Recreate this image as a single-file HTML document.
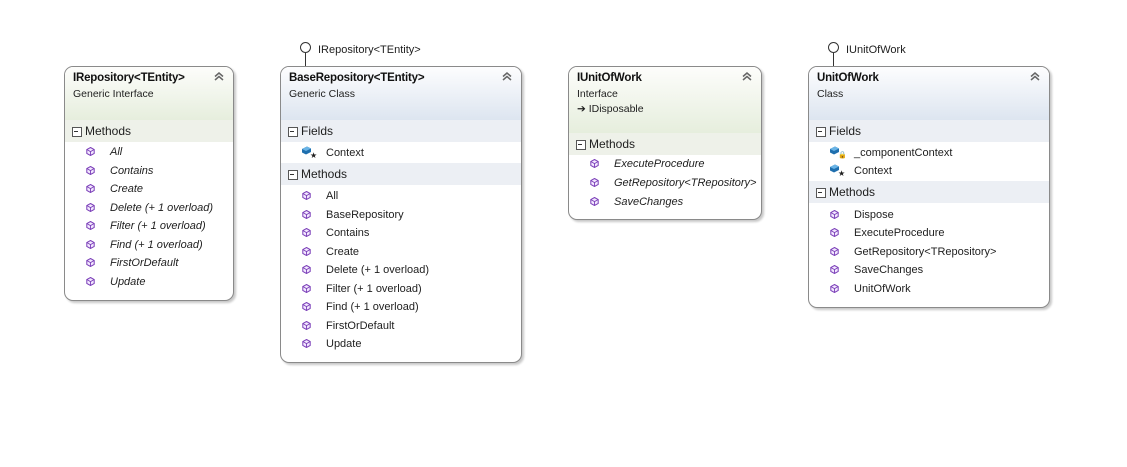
<!DOCTYPE html>
<html><head><meta charset="utf-8"><style>
*{margin:0;padding:0;box-sizing:border-box}
body{width:1127px;height:467px;background:#fff;position:relative;overflow:hidden;font-family:"Liberation Sans",sans-serif;font-size:11px;color:#1e1e1e}
.box{position:absolute;border:1px solid #8a8a8a;border-radius:9px;background:#fff;box-shadow:2px 2px 2px #c8c8c8;overflow:hidden}
.hd{position:absolute;left:0;right:0;top:0}
.hd.i{background:linear-gradient(#fdfdfb,#e6eedd)}
.hd.c{background:linear-gradient(#fdfdfe,#dde5f0)}
.t{position:absolute;left:8px;top:5px;font-weight:bold;font-size:11.5px;color:#111;letter-spacing:-0.2px}
.st{position:absolute;left:8px;top:21px;font-size:10.5px}
.st2{position:absolute;left:8px;top:36px;font-size:10.5px}
.chev{position:absolute;right:9px;top:5px;width:10px;height:9px}
.sec{position:absolute;left:0;right:0;height:22px;background:#f1f1f1;font-size:12px;padding-left:20px;line-height:22px}
.sec.i{background:#eef1e9}
.sec.c{background:#eceff4}
.sec:before{content:"";position:absolute;left:7px;top:7px;width:8px;height:8px;border:1px solid #555;background:#fff}
.sec:after{content:"";position:absolute;left:9px;top:11px;width:4px;height:1px;background:#333}
.it{position:absolute;font-size:11px;white-space:nowrap}
.it.em{font-style:italic}
.m{position:absolute;width:9px;height:9px}
.f{position:absolute;width:12px;height:12px}
.lol{position:absolute;width:11px;height:11px;border:1px solid #333;border-radius:50%;background:#fff}
.ln{position:absolute;width:1px;background:#333}
.lt{position:absolute;font-size:11px}
</style></head><body>
<svg width="0" height="0" style="position:absolute"><defs>
<symbol id="mi" viewBox="0 0 9 9"><path d="M4.5 0.5 L8.2 2.5 L8.2 6.5 L4.5 8.5 L0.8 6.5 L0.8 2.5 Z" fill="#f3e8ff" stroke="#7b3fb8" stroke-width="1"/><path d="M0.8 2.5 L4.5 4.6 L8.2 2.5 M4.5 4.6 L4.5 8.5" fill="none" stroke="#7b3fb8" stroke-width="0.9"/></symbol>
<symbol id="fi" viewBox="0 0 12 12"><path d="M1 4 L6 1.5 L10 3.5 L10 7 L5 9.5 L1 7.5 Z" fill="#1f6fae"/><path d="M1 4 L6 1.5 L10 3.5 L5 6 Z" fill="#6ab4e6"/></symbol>
<symbol id="ch" viewBox="0 0 10 9"><path d="M1 4.5 L5 1 L9 4.5 M1 8 L5 4.5 L9 8" fill="none" stroke="#666" stroke-width="1.5"/></symbol>
</defs></svg>

<!-- Box 1 -->
<div class="box" style="left:64px;top:66px;width:170px;height:235px">
<div class="hd i" style="height:53px"><div class="t">IRepository&lt;TEntity&gt;</div><div class="st">Generic Interface</div><svg class="chev"><use href="#ch"/></svg></div>
<div class="sec i" style="top:53px">Methods</div>
</div>

<!-- Box 2 -->
<div class="lol" style="left:300px;top:42px"></div><div class="ln" style="left:305px;top:53px;height:13px"></div><div class="lt" style="left:318px;top:44px">IRepository&lt;TEntity&gt;</div>
<div class="box" style="left:280px;top:66px;width:242px;height:297px">
<div class="hd c" style="height:53px"><div class="t">BaseRepository&lt;TEntity&gt;</div><div class="st">Generic Class</div><svg class="chev"><use href="#ch"/></svg></div>
<div class="sec c" style="top:53px">Fields</div>
<div class="sec c" style="top:96px">Methods</div>
</div>

<!-- Box 3 -->
<div class="box" style="left:568px;top:66px;width:194px;height:154px">
<div class="hd i" style="height:66px"><div class="t">IUnitOfWork</div><div class="st">Interface</div><div class="st2">➔ IDisposable</div><svg class="chev"><use href="#ch"/></svg></div>
<div class="sec i" style="top:66px">Methods</div>
</div>

<!-- Box 4 -->
<div class="lol" style="left:828px;top:42px"></div><div class="ln" style="left:833px;top:53px;height:13px"></div><div class="lt" style="left:846px;top:44px">IUnitOfWork</div>
<div class="box" style="left:808px;top:66px;width:242px;height:242px">
<div class="hd c" style="height:53px"><div class="t">UnitOfWork</div><div class="st">Class</div><svg class="chev"><use href="#ch"/></svg></div>
<div class="sec c" style="top:53px">Fields</div>
<div class="sec c" style="top:114px">Methods</div>
</div>

<!-- Items box1 -->
<svg class="m" style="left:86px;top:147px"><use href="#mi"/></svg><div class="it em" style="left:110px;top:146px">All</div>
<svg class="m" style="left:86px;top:166px"><use href="#mi"/></svg><div class="it em" style="left:110px;top:165px">Contains</div>
<svg class="m" style="left:86px;top:184px"><use href="#mi"/></svg><div class="it em" style="left:110px;top:183px">Create</div>
<svg class="m" style="left:86px;top:203px"><use href="#mi"/></svg><div class="it em" style="left:110px;top:202px">Delete (+ 1 overload)</div>
<svg class="m" style="left:86px;top:221px"><use href="#mi"/></svg><div class="it em" style="left:110px;top:220px">Filter (+ 1 overload)</div>
<svg class="m" style="left:86px;top:240px"><use href="#mi"/></svg><div class="it em" style="left:110px;top:239px">Find (+ 1 overload)</div>
<svg class="m" style="left:86px;top:258px"><use href="#mi"/></svg><div class="it em" style="left:110px;top:257px">FirstOrDefault</div>
<svg class="m" style="left:86px;top:277px"><use href="#mi"/></svg><div class="it em" style="left:110px;top:276px">Update</div>

<!-- Items box2 -->
<svg class="f" style="left:301px;top:145px"><use href="#fi"/></svg><div class="it" style="left:310px;top:151px;font-size:8px">★</div><div class="it" style="left:326px;top:147px">Context</div>
<svg class="m" style="left:302px;top:191px"><use href="#mi"/></svg><div class="it" style="left:326px;top:190px">All</div>
<svg class="m" style="left:302px;top:210px"><use href="#mi"/></svg><div class="it" style="left:326px;top:209px">BaseRepository</div>
<svg class="m" style="left:302px;top:228px"><use href="#mi"/></svg><div class="it" style="left:326px;top:227px">Contains</div>
<svg class="m" style="left:302px;top:247px"><use href="#mi"/></svg><div class="it" style="left:326px;top:246px">Create</div>
<svg class="m" style="left:302px;top:265px"><use href="#mi"/></svg><div class="it" style="left:326px;top:264px">Delete (+ 1 overload)</div>
<svg class="m" style="left:302px;top:284px"><use href="#mi"/></svg><div class="it" style="left:326px;top:283px">Filter (+ 1 overload)</div>
<svg class="m" style="left:302px;top:302px"><use href="#mi"/></svg><div class="it" style="left:326px;top:301px">Find (+ 1 overload)</div>
<svg class="m" style="left:302px;top:321px"><use href="#mi"/></svg><div class="it" style="left:326px;top:320px">FirstOrDefault</div>
<svg class="m" style="left:302px;top:339px"><use href="#mi"/></svg><div class="it" style="left:326px;top:338px">Update</div>

<!-- Items box3 -->
<svg class="m" style="left:590px;top:159px"><use href="#mi"/></svg><div class="it em" style="left:614px;top:158px">ExecuteProcedure</div>
<svg class="m" style="left:590px;top:178px"><use href="#mi"/></svg><div class="it em" style="left:614px;top:177px">GetRepository&lt;TRepository&gt;</div>
<svg class="m" style="left:590px;top:197px"><use href="#mi"/></svg><div class="it em" style="left:614px;top:196px">SaveChanges</div>

<!-- Items box4 -->
<svg class="f" style="left:829px;top:145px"><use href="#fi"/></svg><div class="it" style="left:838px;top:151px;font-size:7px">🔒</div><div class="it" style="left:854px;top:147px">_componentContext</div>
<svg class="f" style="left:829px;top:163px"><use href="#fi"/></svg><div class="it" style="left:838px;top:169px;font-size:8px">★</div><div class="it" style="left:854px;top:165px">Context</div>
<svg class="m" style="left:830px;top:210px"><use href="#mi"/></svg><div class="it" style="left:854px;top:209px">Dispose</div>
<svg class="m" style="left:830px;top:228px"><use href="#mi"/></svg><div class="it" style="left:854px;top:227px">ExecuteProcedure</div>
<svg class="m" style="left:830px;top:247px"><use href="#mi"/></svg><div class="it" style="left:854px;top:246px">GetRepository&lt;TRepository&gt;</div>
<svg class="m" style="left:830px;top:265px"><use href="#mi"/></svg><div class="it" style="left:854px;top:264px">SaveChanges</div>
<svg class="m" style="left:830px;top:284px"><use href="#mi"/></svg><div class="it" style="left:854px;top:283px">UnitOfWork</div>
</body></html>
